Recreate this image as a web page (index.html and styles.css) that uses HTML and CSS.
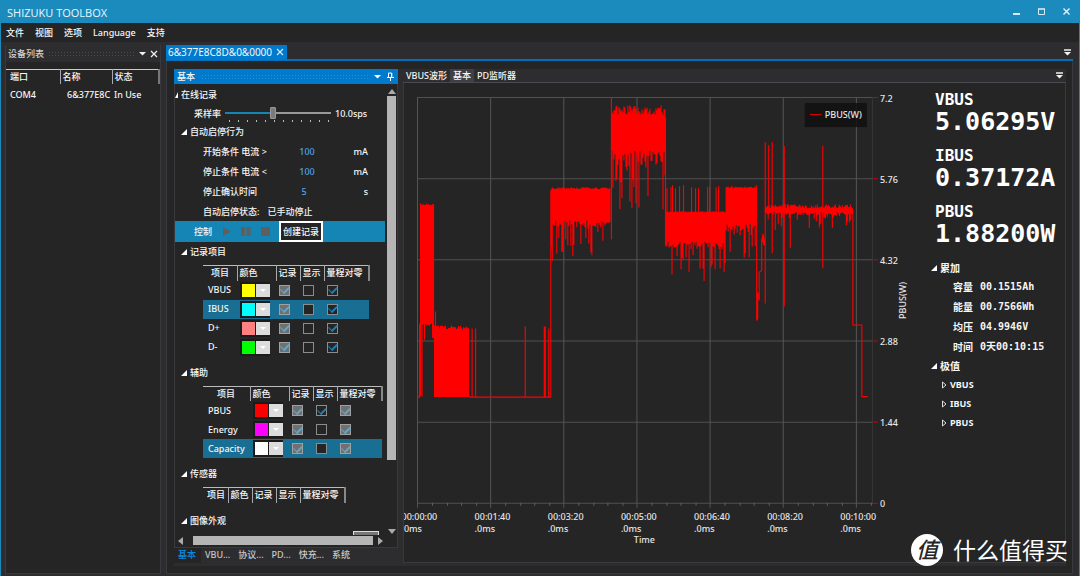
FILE: index.html
```html
<!DOCTYPE html>
<html lang="zh-CN">
<head>
<meta charset="utf-8">
<title>SHIZUKU TOOLBOX</title>
<link rel="stylesheet" href="styles.css">
</head>
<body>
<div class="app">
  <header class="titlebar">
    <h1 class="title">SHIZUKU TOOLBOX</h1>
    <div class="winbtns">
      <button class="plain" aria-label="Minimize"><svg width="9" height="9" viewBox="0 0 9 9"><path d="M1 7h7" stroke="#d5ecf6" stroke-width="2"/></svg></button>
      <button class="plain" aria-label="Maximize"><svg width="9" height="9" viewBox="0 0 9 9"><path d="M1.5 2v5.5h6V2" stroke="#d5ecf6" fill="none"/><path d="M1 2h7" stroke="#d5ecf6" stroke-width="1.6"/></svg></button>
      <button class="plain" aria-label="Close"><svg width="9" height="9" viewBox="0 0 9 9"><path d="M1.5 1.5l6 6M7.500 1.500l-6 6" stroke="#e5f4fa" stroke-width="1.400"/></svg></button>
    </div>
  </header>
  <nav class="menu">
    <button class="plain">文件</button><button class="plain">视图</button><button class="plain">选项</button><button class="plain">Language</button><button class="plain">支持</button>
  </nav>
  <main class="work">
    <aside class="devices">
      <div class="dev-head">
        <span>设备列表</span><i class="dots"></i>
        <button class="plain" aria-label="Menu"><svg width="7" height="5" viewBox="0 0 7 5"><path d="M0 1h7L3.500 4.500z" fill="#f1f1f1"/></svg></button>
        <button class="plain" aria-label="Close panel"><svg width="8" height="8" viewBox="0 0 8 8"><path d="M1 1l6 6M7 1L1 7" stroke="#f1f1f1" stroke-width="1.200"/></svg></button>
      </div>
      <table class="dev-table">
        <thead><tr><th>端口</th><th>名称</th><th>状态</th></tr></thead>
        <tbody><tr><td>COM4</td><td class="dev-id">6&amp;377E8C</td><td>In Use</td></tr></tbody>
      </table>
    </aside>
    <section class="doc">
      <div class="doc-tabs">
        <div class="doc-tab"><span>6&amp;377E8C8D&amp;0&amp;0000</span><button class="plain" aria-label="Close tab"><svg width="8" height="8" viewBox="0 0 8 8"><path d="M1 1l6 6M7 1L1 7" stroke="#d5ecff" stroke-width="1.100"/></svg></button></div>
        <button class="plain" aria-label="Documents"><svg width="7" height="7" viewBox="0 0 7 7"><path d="M0 1h7" stroke="#f1f1f1" stroke-width="1.500"/><path d="M0 3h7L3.500 6.500z" fill="#f1f1f1"/></svg></button>
      </div>
      <div class="doc-body">
        <div class="dock">
          <section class="pane">
            <div class="pane-head"><span>基本</span><i class="dots"></i>
              <button class="plain" aria-label="Pane menu"><svg width="7" height="5" viewBox="0 0 7 5"><path d="M0 1h7L3.500 4.500z" fill="#fff"/></svg></button>
              <button class="plain" aria-label="Pin"><svg width="7" height="9" viewBox="0 0 7 9"><path d="M1.500 5V1h3v4M0 5.500h7M3.500 5.500V9" stroke="#fff" fill="none"/><path d="M4.800 1v4" stroke="#fff"/></svg></button>
            </div>
            <div class="pane-body">
              <div class="props">
                <div class="node root"><i class="tri"></i>在线记录</div>
                <div class="rate"><label for="rate">采样率</label>
                  <div class="slider"><input id="rate" type="range" min="0" max="100" value="45"><div class="ticks"></div></div>
                  <span>10.0sps</span></div>
                <div class="node"><i class="tri"></i>自动启停行为</div>
                <div class="cond"><label for="c1">开始条件 电流 &gt;</label><input id="c1" value="100"><span>mA</span></div>
                <div class="cond"><label for="c2">停止条件 电流 &lt;</label><input id="c2" value="100"><span>mA</span></div>
                <div class="cond"><label for="c3">停止确认时间</label><input id="c3" class="short" value="5"><span>s</span></div>
                <div class="state"><span>自动启停状态:</span><span>已手动停止</span></div>
                <div class="control"><span>控制</span>
                  <button class="plain" aria-label="Play"><svg width="9" height="9" viewBox="0 0 9 9"><path d="M1 0l8 4.500L1 9z" fill="#5f5f5f"/></svg></button>
                  <button class="plain" aria-label="Pause"><svg width="10" height="9" viewBox="0 0 10 9"><path d="M0 0h4v9H0zM5.500 0h4v9h-4z" fill="#5f5f5f"/></svg></button>
                  <button class="plain" aria-label="Stop"><svg width="9" height="9" viewBox="0 0 9 9"><path d="M0 0h9v9H0z" fill="#5f5f5f"/></svg></button>
                  <button class="create">创建记录</button></div>
                <div class="node"><i class="tri"></i>记录项目</div>
                <table class="items t-main">
                  <colgroup><col class="c-name"><col class="c-color"><col class="c-chk"><col class="c-chk"><col class="c-zero"></colgroup>
                  <thead><tr><th>项目</th><th>颜色</th><th>记录</th><th>显示</th><th>量程对零</th></tr></thead>
                  <tbody>
                    <tr><td>VBUS</td><td><button class="color yellow" aria-label="VBUS 颜色"></button></td><td><input type="checkbox" aria-label="记录" checked disabled></td><td><input type="checkbox" aria-label="显示"></td><td><input type="checkbox" aria-label="量程对零" checked></td></tr>
                    <tr class="sel"><td>IBUS</td><td><button class="color cyan" aria-label="IBUS 颜色"></button></td><td><input type="checkbox" aria-label="记录" checked disabled></td><td><input type="checkbox" aria-label="显示"></td><td><input type="checkbox" aria-label="量程对零" checked></td></tr>
                    <tr><td>D+</td><td><button class="color pink" aria-label="D+ 颜色"></button></td><td><input type="checkbox" aria-label="记录" checked disabled></td><td><input type="checkbox" aria-label="显示"></td><td><input type="checkbox" aria-label="量程对零" checked></td></tr>
                    <tr><td>D-</td><td><button class="color green" aria-label="D- 颜色"></button></td><td><input type="checkbox" aria-label="记录" checked disabled></td><td><input type="checkbox" aria-label="显示"></td><td><input type="checkbox" aria-label="量程对零" checked></td></tr>
                  </tbody>
                </table>
                <div class="node later"><i class="tri"></i>辅助</div>
                <table class="items t-aux">
                  <colgroup><col class="c-name"><col class="c-color"><col class="c-chk"><col class="c-chk"><col class="c-zero"></colgroup>
                  <thead><tr><th>项目</th><th>颜色</th><th>记录</th><th>显示</th><th>量程对零</th></tr></thead>
                  <tbody>
                    <tr><td>PBUS</td><td><button class="color red" aria-label="PBUS 颜色"></button></td><td><input type="checkbox" aria-label="记录" checked disabled></td><td><input type="checkbox" aria-label="显示" checked></td><td><input type="checkbox" aria-label="量程对零" checked disabled></td></tr>
                    <tr><td>Energy</td><td><button class="color magenta" aria-label="Energy 颜色"></button></td><td><input type="checkbox" aria-label="记录" checked disabled></td><td><input type="checkbox" aria-label="显示"></td><td><input type="checkbox" aria-label="量程对零" checked disabled></td></tr>
                    <tr class="sel"><td>Capacity</td><td><button class="color white" aria-label="Capacity 颜色"></button></td><td><input type="checkbox" aria-label="记录" checked disabled></td><td><input type="checkbox" aria-label="显示"></td><td><input type="checkbox" aria-label="量程对零" checked disabled></td></tr>
                  </tbody>
                </table>
                <div class="node later"><i class="tri"></i>传感器</div>
                <table class="items t-sensor">
                  <colgroup><col class="c-name"><col class="c-color"><col class="c-chk"><col class="c-chk"><col class="c-zero"></colgroup>
                  <thead><tr><th>项目</th><th>颜色</th><th>记录</th><th>显示</th><th>量程对零</th></tr></thead>
                </table>
                <div class="node last"><i class="tri"></i>图像外观</div>
                <div class="peek"></div>
              </div>
              <div class="vbar"><i class="up"></i><i class="thumb"></i><i class="down"></i></div>
              <div class="hbar"><i class="lt"></i><i class="thumb"></i><i class="rt"></i></div>
            </div>
            <div class="pane-tabs"><button class="on">基本</button><button>VBU...</button><button>协议...</button><button>PD...</button><button>快充...</button><button>系统</button></div>
          </section>
          <section class="view">
            <div class="view-tabs"><button>VBUS波形</button><button class="on">基本</button><button>PD监听器</button>
              <button class="more" aria-label="Views"><svg width="7" height="7" viewBox="0 0 7 7"><path d="M0 1h7" stroke="#f1f1f1" stroke-width="1.500"/><path d="M0 3h7L3.500 6.500z" fill="#f1f1f1"/></svg></button></div>
            <div class="view-body">
              <svg class="chart" viewBox="404 83 516 476" role="img" aria-label="PBUS(W)">
                <g id="grid"></g>
                <path id="trace" fill="none" stroke="#f00" stroke-width="1.100"/>
                <rect x="804" y="103" width="62" height="24" fill="#111" fill-opacity=".85"/>
                <path d="M809 114.500h12" stroke="#e00000"/>
                <text x="824" y="118">PBUS(W)</text>
                <text x="644" y="542" text-anchor="middle">Time</text>
                <text transform="translate(905 300) rotate(-90)" text-anchor="middle">PBUS(W)</text>
              </svg>
              <div class="readout">
                <dl class="meters">
                  <dt>VBUS</dt><dd>5.06295V</dd>
                  <dt>IBUS</dt><dd>0.37172A</dd>
                  <dt>PBUS</dt><dd>1.88200W</dd>
                </dl>
                <div class="node"><i class="tri"></i>累加</div>
                <dl class="sums">
                  <dt>容量</dt><dd>00.1515Ah</dd>
                  <dt>能量</dt><dd>00.7566Wh</dd>
                  <dt>均压</dt><dd>04.9946V</dd>
                  <dt>时间</dt><dd>0天00:10:15</dd>
                </dl>
                <div class="node"><i class="tri"></i>极值</div>
                <ul class="peaks">
                  <li><svg width="5" height="8" viewBox="0 0 5 8"><path d="M.5 1v6L4 4z" fill="none" stroke="#ddd"/></svg>VBUS</li>
                  <li><svg width="5" height="8" viewBox="0 0 5 8"><path d="M.5 1v6L4 4z" fill="none" stroke="#ddd"/></svg>IBUS</li>
                  <li><svg width="5" height="8" viewBox="0 0 5 8"><path d="M.5 1v6L4 4z" fill="none" stroke="#ddd"/></svg>PBUS</li>
                </ul>
              </div>
            </div>
          </section>
        </div>
      </div>
    </section>
  </main>
  <div class="mark"><span class="badge">值</span><span>什么值得买</span></div>
</div>
<script src="chart.js"></script>
</body>
</html>
```
FILE: styles.css
```css
* { box-sizing: border-box; }
body {
  margin: 0;
  background: #2d2d30;
  color: #f6f6f6;
  font: 500 9px/12px "Noto Sans", "Noto Sans CJK SC", sans-serif;
}
button, input { font: inherit; color: inherit; margin: 0; padding: 0; border: 0; background: none; border-radius: 0; }
svg { display: block; flex: none; }
dl, dd, ul { margin: 0; padding: 0; list-style: none; }
.plain { display: flex; align-items: center; white-space: nowrap; }

.app { position: relative; display: flex; flex-direction: column; min-height: 100vh; border: 1px solid #1b8bbe; border-top: 0; }
.titlebar { display: flex; align-items: center; justify-content: space-between; height: 23px; flex: none; padding: 0 8px 0 6px; background: #1b8bbe; }
.title { margin: 0; padding-top: 2px; font: 400 11px/20px "Open Sans", sans-serif; color: #e8f6fc; }
.winbtns { display: flex; gap: 16px; }
.menu { display: flex; align-items: center; gap: 11px; height: 19px; flex: none; padding: 0 5px; background: #252526; }
.work { flex: 1; display: grid; grid-template-columns: 156px 1fr; gap: 5px; padding: 3px 6px 3px 4px; }

.dots { flex: 1; height: 5px; background: radial-gradient(circle, currentColor 0 0.5px, transparent 1px) 0 0 / 3px 3px; opacity: .18; }

.devices { display: flex; flex-direction: column; background: #252526; border: 1px solid #3a3a3e; border-top: 0; }
.dev-head { display: flex; align-items: center; gap: 4px; height: 17px; padding: 0 2px; background: #2d2d30; color: #d0d0d0; }
.dev-table { width: 100%; margin-top: 7px; border-collapse: collapse; table-layout: fixed; border-top: 1px solid #ccc; }
.dev-table th, .dev-table td { height: 14px; padding: 0 0 0 2px; text-align: left; font-weight: 500; white-space: nowrap; }
.dev-table th { border-right: 1px solid #aaa; }
.dev-table th:last-child { border-right: 2px solid #777; }
.dev-table th:first-child, .dev-table td:first-child { width: 54px; padding-left: 4px; }
.dev-table th:nth-child(2) { width: 52px; }
.dev-table td { height: 23px; }
.dev-table .dev-id { padding-left: 7px; }

.doc { display: flex; flex-direction: column; min-width: 0; }
.doc-tabs { display: flex; align-items: center; justify-content: space-between; height: 16px; padding-right: 2px; border-bottom: 2px solid #0070bd; }
.doc-tab { display: flex; align-items: center; justify-content: space-between; width: 121px; height: 15px; padding: 0 3px 0 2px; background: #007acc; font-size: 10px; font-weight: 400; }
.doc-body { flex: 1; display: flex; padding: 8px 6px 7px 7px; background: #252526; border: 1px solid #3a3a3e; border-top: 0; }
.dock { flex: 1; display: grid; grid-template-columns: 224px 1fr; gap: 5px; min-width: 0; padding-bottom: 3px; background: #2d2d30; }

.pane { display: flex; flex-direction: column; }
.pane-head { display: flex; align-items: center; gap: 6px; height: 15px; padding: 0 4px 0 3px; background: #007acc; }
.pane-body { flex: 1; display: grid; grid-template-columns: 1fr 11px; grid-template-rows: 1fr 12px; background: #252526; border: 1px solid #3a3a3e; border-top: 0; }
.props { padding-top: 1px; display: flex; flex-direction: column; min-width: 0; }
.node { display: flex; align-items: center; gap: 3px; height: 20px; padding-left: 6px; }
.tri { width: 0; height: 0; border-left: 6px solid transparent; border-bottom: 6px solid #fff; }
.root { padding-left: 0; }
.root .tri { border-left-width: 3px; }
.later { margin-top: 6px; }
.last { margin-top: 8px; }

.rate { display: flex; align-items: center; gap: 4px; height: 17px; padding-left: 19px; }
.slider { width: 106px; padding-top: 3px; }
.slider input { display: block; width: 100%; height: 10px; appearance: none; background: linear-gradient(90deg, #1585b5 45%, #999 45%) center / 100% 2px no-repeat; }
.slider input::-webkit-slider-thumb { appearance: none; width: 6px; height: 12px; background: #7b7b7b; border: 1px solid #999; border-radius: 1px; }
.ticks { height: 2px; margin: 2px 0 0 4px; background: repeating-linear-gradient(90deg, #bbb 0 1px, transparent 1px 9px); }

.cond { display: grid; grid-template-columns: 90px 1fr auto; align-items: center; height: 20px; padding: 0 18px 0 28px; }
.cond input { width: 28px; text-align: center; color: #4fa3e0; }
.cond .short { width: 22px; }
.state { display: flex; align-items: center; gap: 8px; height: 19px; padding-left: 28px; }
.control { display: flex; align-items: center; gap: 10px; height: 21px; margin-right: 1px; padding-left: 19px; background: #1585b5; }
.create { align-self: stretch; width: 44px; margin-left: -1px; background: #252526; border: 2px solid #fff; white-space: nowrap; }

.items { margin: 3px 0 0 28px; border-collapse: collapse; table-layout: fixed; }
.items thead { border-top: 1px solid #bbb; }
.items th { height: 15px; padding: 0 0 0 2px; text-align: left; font-weight: 500; white-space: nowrap; border-right: 1px solid #aaa; }
.items th:last-child { border-right: 2px solid #888; }
.items td { height: 19px; padding: 0 0 0 3px; }
.items td:first-child { padding-left: 5px; }
.items .sel { background: #196e93; }
.c-chk { width: 24px; }
.c-zero { width: 45px; }
.t-main { width: 166px; }
.t-main .c-name { width: 34px; }
.t-main .c-color, .t-aux .c-color { width: 39px; }
.t-main th:first-child { padding-left: 8px; }
.t-aux { width: 179px; }
.t-aux .c-name { width: 47px; }
.t-aux th:first-child { padding-left: 14px; }
.t-sensor { width: 142px; }
.t-sensor .c-name { width: 25px; }
.t-sensor .c-color { width: 24px; }
.t-sensor th:first-child { padding-left: 4px; }

.color { display: block; width: 30px; height: 17px; border: 2px solid #1b1b1b; border-right: 0;
  background: linear-gradient(90deg, #1b1b1b 14px, #dcdcdc 14px); position: relative; }
.color::before { content: ""; display: block; width: 13px; height: 13px; background: var(--swatch); }
.color::after { content: ""; position: absolute; right: 4px; top: 5px; border: 3px solid transparent; border-top-color: #fff; border-bottom: 0; }
.yellow { --swatch: #ff0; }
.cyan { --swatch: #0ff; }
.pink { --swatch: #ff8080; }
.green { --swatch: #0f0; }
.red { --swatch: #f00; }
.magenta { --swatch: #f0f; }
.white { --swatch: #fff; }
.items input { appearance: none; display: grid; place-items: center; width: 11px; height: 11px; border: 1px solid #8c8c8c; background: #252526; }
.items input:checked::before { content: ""; width: 7px; height: 4px; margin-top: -2px; border-left: 1px solid #1d80b8; border-bottom: 2px solid #1d80b8; transform: rotate(-45deg); }
.items input:disabled { background: #707070; border-color: #a0a0a0; }
.items input:disabled::before { border-color: #5fa8cc; }

.peek { width: 26px; height: 4px; margin-left: 178px; background: #777; border: 1px solid #ddd; border-bottom: 0; }

.vbar { display: flex; flex-direction: column; align-items: center; padding: 5px 0 0; }
.vbar .thumb { width: 9px; height: 364px; margin: 2px 0 auto; background: #b5b5b5; }
.up { border: 4px solid transparent; border-bottom: 5px solid #aaa; border-top: 0; }
.down { border: 4px solid transparent; border-top: 5px solid #aaa; border-bottom: 0; margin-bottom: 1px; }
.hbar { grid-column: 1 / -1; display: flex; align-items: center; padding: 0 14px 0 3px; }
.hbar .thumb { flex: 1; height: 9px; margin: 0 5px 0 10px; background: #b5b5b5; }
.lt { border: 4px solid transparent; border-right: 5px solid #aaa; border-left: 0; }
.rt { border: 4px solid transparent; border-left: 5px solid #aaa; border-right: 0; }
.pane-tabs { display: flex; height: 15px; }
.pane-tabs button { padding: 0 4px; color: #c8c8c8; }
.pane-tabs .on { padding: 0 5px 0 4px; background: #252526; color: #0a8be0; }

.view { display: flex; flex-direction: column; min-width: 0; }
.view-tabs { display: flex; height: 14px; border-bottom: 1px solid #4a4a50; }
.view-tabs button { padding: 0 3px; }
.view-tabs .on { background: #3f3f46; }
.view-tabs .more { margin-left: auto; }
.view-body { flex: 1; display: flex; align-items: flex-start; background: #252526; border: 1px solid #3a3a3e; border-top: 0; }
.chart { flex: 1; min-width: 0; overflow: hidden; }
.chart text { fill: #e6e6e6; font-size: 9px; }
.readout { flex: none; width: 144px; padding: 9px 0 0 10px; font-weight: 700; }
.meters { padding-left: 4px; font-family: "DejaVu Sans Mono", monospace; color: #fff; }
.meters dt { font-size: 16px; line-height: 16px; }
.meters dd { margin-bottom: 12px; font-size: 25px; line-height: 28px; }
.meters dd:last-child { margin-bottom: 11px; }
.readout .node { height: 18px; padding-left: 0; font-size: 10px; }
.sums { display: grid; grid-template-columns: 27px 1fr; padding-left: 22px; font-size: 10px; line-height: 20px; }
.sums dd { font-family: "DejaVu Sans Mono", "Noto Sans CJK SC", monospace; }
.peaks { padding-left: 11px; }
.peaks li { display: flex; align-items: center; gap: 3px; height: 19px; }

.mark { position: absolute; right: 11px; bottom: 10px; display: flex; align-items: center; gap: 10px; color: #fff; font-size: 23px; line-height: 34px; font-weight: 400; }
.badge { width: 32px; height: 32px; border-radius: 50%; background: #fff; color: #252526; font-size: 22px; line-height: 30px; text-align: center; font-style: italic; font-weight: 500; }
```
FILE: chart.js
```js
const NS = "http://www.w3.org/2000/svg";
const grid = document.getElementById("grid");

function add(tag, attrs, text) {
  const el = document.createElementNS(NS, tag);
  for (const k in attrs) el.setAttribute(k, attrs[k]);
  if (text) el.textContent = text;
  grid.appendChild(el);
}
function line(x1, y1, x2, y2, stroke) {
  add("path", { d: `M${x1} ${y1}L${x2} ${y2}`, stroke });
}

const times = ["00:00:00", "00:01:40", "00:03:20", "00:05:00", "00:06:40", "00:08:20", "00:10:00"];
const levels = ["7.2", "5.76", "4.32", "2.88", "1.44", "0"];
levels.forEach((v, i) => {
  const y = 97.5 + i * 81;
  line(417, y, 872, y, "#505050");
  line(872, y, 877, y, "#d00000");
  add("text", { x: 879, y: y + 4 }, v);
});
times.forEach((t, i) => {
  const x = 417.5 + i * 73;
  line(x, 97, x, 507, "#565656");
  for (let k = 1; k < 5; k++) {
    const m = Math.round(x + k * 14.6) + 0.5;
    if (m < 872) line(m, 502, m, 505, "#606060");
  }
  add("text", { x: x - 16, y: 519 }, t);
  add("text", { x: x - 16, y: 531 }, ".0ms");
});
line(871.5, 97, 871.5, 502, "#383838");

let seed = 11;
function rnd() {
  seed = (seed * 16807) % 2147483647;
  return seed / 2147483647;
}

let d = "M417 396.5H420";
const bar = (x, a, b) => { d += `M${x} ${a}V${b}`; };

// Dense switching region: a solid core with ragged edges and long downward spikes.
function band(x0, x1, top, up, bottom, ragged, spike, rate) {
  for (let x = x0; x <= x1; x += 1) {
    const t = top - rnd() * up;
    const b = rnd() < rate ? bottom + rnd() * spike : bottom - rnd() * ragged;
    bar(x.toFixed(1), t.toFixed(1), b.toFixed(1));
  }
}

bar(419.5, 323, 396); bar(420.5, 203, 396); bar(422, 204, 396);
band(421.5, 433, 205, 2, 325, 2, 20, 0.25);
bar(433.5, 204, 338); bar(435.5, 311, 396);
band(434.5, 469, 329, 4, 396.5, 0, 0, 0);
bar(472, 328, 396); bar(475.5, 328, 396);
bar(525, 326, 396); bar(544, 326, 396); bar(545, 326, 396); bar(548.5, 328, 396);
d += "M469 396.5H551";
bar(550.5, 190, 396); bar(552, 190, 261);
band(551.5, 610, 189, 2, 228, 8, 30, 0.28);
bar(611, 97, 239);
band(611.5, 665, 115, 10, 166, 16, 46, 0.3);
bar(665, 118, 245);
band(665.5, 725, 212, 1, 249, 8, 32, 0.26);
[666.5, 670.5, 672, 675, 679, 683, 691, 695, 698, 707, 709, 715.5, 718].forEach(x => bar(x, 185 + Math.round(rnd() * 4), 215));
band(725.5, 756, 188, 2, 233, 10, 30, 0.3);
d += "M756 185V320L757 318V292L758.500 300V272L761 270V240L762.500 234L764 245";
bar(762, 234, 242); bar(763, 236, 245);
bar(764.5, 142, 303); bar(768, 145, 212); bar(771.5, 142, 253);
bar(783.5, 146, 306); bar(789.5, 205, 248); bar(822, 146, 268);
band(765.5, 852, 208, 4, 215, 3, 16, 0.26);
d += "M852 210V324.500H861V396H867";
document.getElementById("trace").setAttribute("d", d);
```
